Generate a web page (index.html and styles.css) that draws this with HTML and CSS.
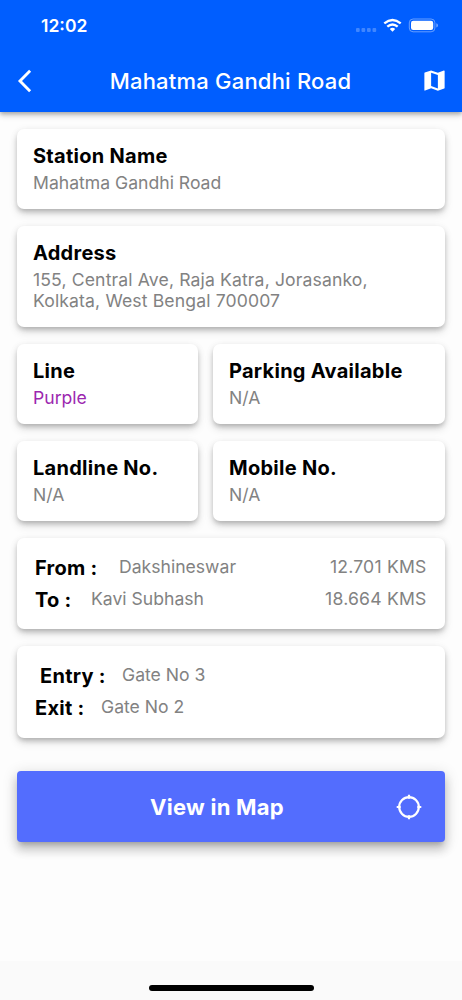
FILE: index.html
```html
<!DOCTYPE html>
<html lang="en">
<head>
<meta charset="utf-8">
<title>Mahatma Gandhi Road</title>
<link rel="stylesheet" href="styles.css">
</head>
<body>
<div class="screen">
  <header class="header">
    <div class="status">
      <span class="time">12:02</span>
      <svg class="indicators" width="84" height="16" viewBox="0 0 84 16" fill="#fff">
        <g opacity=".25"><rect x="1" y="10" width="3.7" height="4" rx="1"/><rect x="6.5" y="10" width="3.7" height="4" rx="1"/><rect x="12" y="10" width="3.7" height="4" rx="1"/><rect x="17.5" y="10" width="3.7" height="4" rx="1"/></g>
        <g fill="none" stroke="#fff" stroke-width="2.4"><path d="M29.3 5.3Q37.5-1.5 45.7 5.3"/><path d="M32.3 8.6Q37.5 4.2 42.7 8.6"/></g>
        <path d="M34.8 11Q37.5 8.7 40.2 11L37.5 13.8Z"/>
        <rect x="54.3" y="1" width="25.6" height="12.8" rx="3.8" fill="none" stroke="#fff" stroke-opacity=".4"/>
        <rect x="56" y="2.8" width="22.2" height="9.2" rx="2.2"/>
        <path d="M81.3 5.2Q83 5.8 83 7.4T81.3 9.6Z" opacity=".45"/>
      </svg>
    </div>
    <div class="bar">
      <svg class="back" width="16" height="24" viewBox="0 0 16 24" fill="none" stroke="#fff" stroke-width="2.9"><path d="M14.1 1.700 4 12l10.100 10.300"/></svg>
      <h1 class="title">Mahatma Gandhi Road</h1>
      <svg class="map" width="27" height="27" viewBox="0 0 24 24" fill="#fff"><path d="M20.5 3l-.16.03L15 5.1 9 3 3.36 4.9c-.21.07-.36.25-.36.48V20.5c0 .28.22.5.5.5l.16-.03L9 18.9l6 2.1 5.64-1.9c.21-.07.36-.25.36-.48V3.500c0-.28-.22-.5-.5-.5zM15 19l-6-2.110V5l6 2.110V19z"/></svg>
    </div>
  </header>
  <main class="content">
    <section class="card"><h2 class="label">Station Name</h2><p class="value">Mahatma Gandhi Road</p></section>
    <section class="card address"><h2 class="label">Address</h2><p class="value">155, Central Ave, Raja Katra, Jorasanko,<br>Kolkata, West Bengal 700007</p></section>
    <div class="pair">
      <section class="card"><h2 class="label">Line</h2><p class="value purple">Purple</p></section>
      <section class="card"><h2 class="label">Parking Available</h2><p class="value">N/A</p></section>
    </div>
    <div class="pair">
      <section class="card"><h2 class="label">Landline No.</h2><p class="value">N/A</p></section>
      <section class="card"><h2 class="label">Mobile No.</h2><p class="value">N/A</p></section>
    </div>
    <section class="card rows">
      <div class="row"><span class="label from">From :</span><span class="value">Dakshineswar</span><span class="value distance">12.701 KMS</span></div>
      <div class="row"><span class="label to">To :</span><span class="value">Kavi Subhash</span><span class="value distance">18.664 KMS</span></div>
    </section>
    <section class="card rows">
      <div class="row"><span class="label entry">Entry :</span><span class="value">Gate No 3</span></div>
      <div class="row"><span class="label exit">Exit :</span><span class="value">Gate No 2</span></div>
    </section>
    <button class="view"><span class="caption">View in Map</span>
      <svg width="26" height="26" viewBox="0 0 26 26" fill="none" stroke="#fff" stroke-width="2.200"><circle cx="13" cy="13" r="9.8"/><path d="M13 .7v4M13 21.300v4M.7 13h4M21.300 13h4"/></svg>
    </button>
  </main>
  <footer class="footer"><div class="home"></div></footer>
</div>
</body>
</html>
```
FILE: styles.css
```css
* { box-sizing: border-box; }
body { margin: 0; font-family: Inter, "Liberation Sans", sans-serif; background: #fdfdfd; }
.screen { height: 1000px; display: flex; flex-direction: column; overflow: hidden; }
.header { height: 112px; flex: none; background: #005eff; color: #fff; box-shadow: 0 2px 4px rgba(0,0,0,.25), 0 4px 6px rgba(0,0,0,.12); }
.status { height: 50px; padding: 17px 23px 0 41px; display: flex; justify-content: space-between; }
.time { font-size: 17.500px; line-height: 18px; font-weight: 600; }
.indicators { margin-top: 1px; }
.bar { height: 61px; padding: 0 14px 0 16px; display: flex; align-items: center; justify-content: space-between; }
.back { margin-right: 8px; }
.title { margin: 0; font-size: 22px; line-height: 26px; font-weight: 500; white-space: nowrap; letter-spacing: .21px; }
.content { flex: 1; padding: 16.600px 17px 0; display: flex; flex-direction: column; gap: 16.500px; }
.card { background: #fff; border-radius: 7px; padding: 15.700px 16px; height: 80.500px; box-shadow: 0 3px 5px -1px rgba(0,0,0,.2), 0 5px 8px rgba(0,0,0,.13), 0 1px 8px rgba(0,0,0,.06); }
.address { height: 101.700px; }
.label { margin: 0 0 4px; color: #000; font-size: 20px; line-height: 24px; font-weight: 650; letter-spacing: .27px; white-space: nowrap; }
.value { margin: 0; color: #828282; font-size: 17.600px; line-height: 21px; font-weight: 400; letter-spacing: 0; white-space: nowrap; }
.address .value { letter-spacing: .13px; }
.value.purple { color: #9c27b0; }
.pair { display: grid; grid-template-columns: 180.500px 1fr; gap: 15.500px; }
.card.rows { height: 91.700px; padding: 18.200px 18.500px 0 18px; }
.row { display: flex; height: 32.300px; }
.row .label { flex: none; }
.from { width: 84px; }
.to { width: 56px; }
.entry { width: 87px; padding-left: 5px; }
.exit { width: 66px; }
.value.distance { margin-left: auto; letter-spacing: .2px; }
.view { margin-top: 16.500px; height: 71.500px; flex: none; border: 0; border-radius: 4px; padding: 1px 23px 0 21px; display: flex; align-items: center; background: #536dfe; color: #fff; font-family: inherit; box-shadow: 0 5px 5px -3px rgba(0,0,0,.2), 0 8px 10px 1px rgba(0,0,0,.14), 0 3px 14px 2px rgba(0,0,0,.12); }
.caption { flex: 1; text-align: center; font-size: 22px; line-height: 26px; font-weight: 700; letter-spacing: .25px; }
.footer { height: 39px; flex: none; background: #fafafa; display: flex; justify-content: center; align-items: flex-start; padding-top: 24px; }
.home { width: 165px; height: 6px; border-radius: 3px; background: #000; }
```
